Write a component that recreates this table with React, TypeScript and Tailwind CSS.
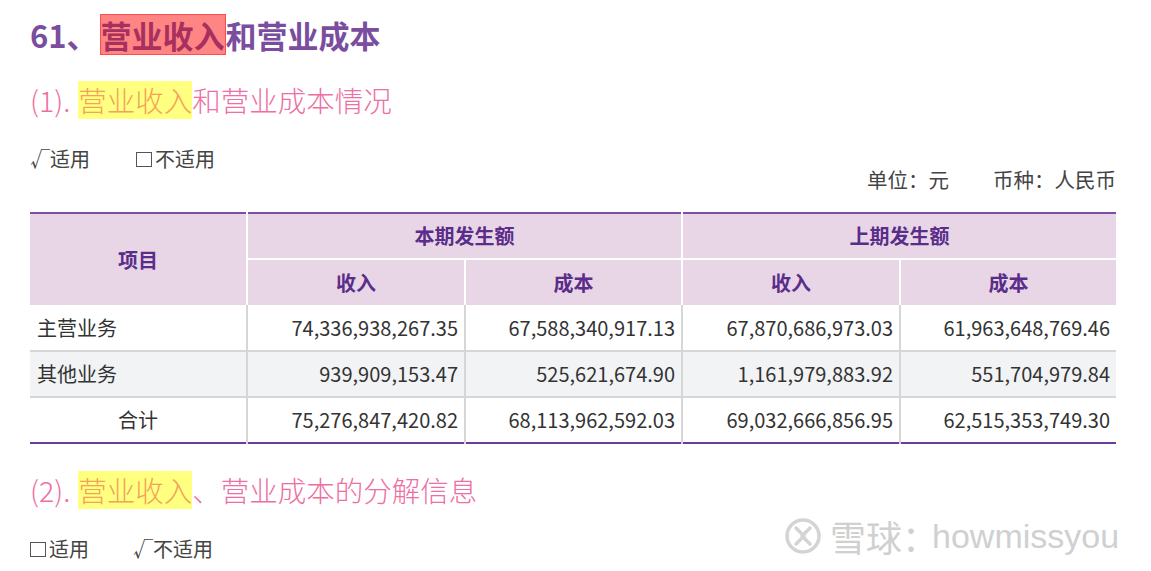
const ROWS = [
  { name: '主营业务', cells: ['74,336,938,267.35', '67,588,340,917.13', '67,870,686,973.03', '61,963,648,769.46'], bg: 'bg-white', center: false },
  { name: '其他业务', cells: ['939,909,153.47', '525,621,674.90', '1,161,979,883.92', '551,704,979.84'], bg: 'bg-[#f2f3f5]', center: false },
  { name: '合计', cells: ['75,276,847,420.82', '68,113,962,592.03', '69,032,666,856.95', '62,515,353,749.30'], bg: 'bg-white', center: true },
];

function XueqiuLogo() {
  return (
    <svg width="38" height="38" viewBox="0 0 38 38" fill="none">
      <circle cx="19" cy="19" r="16" stroke="#d4d4d4" strokeWidth="3.5" />
      <path d="M12 11l8 8-8 8" stroke="#d4d4d4" strokeWidth="3.5" strokeLinecap="round" strokeLinejoin="round" />
      <path d="M26 11l-8 8 8 8" stroke="#d4d4d4" strokeWidth="3.5" strokeLinecap="round" strokeLinejoin="round" />
    </svg>
  );
}

function Box() {
  return <span className="inline-block w-[16px] h-[15px] border border-[#555] mr-[3px]" />;
}

export default function App() {
  return (
    <div
      className="relative w-[1151px] h-[571px] overflow-hidden bg-white text-[#333]"
      style={{ fontFamily: '"Noto Sans CJK SC", "Noto Sans", sans-serif' }}
    >
      <div className="px-[30px]">
        {/* Title */}
        <h1 className="pt-[14px] h-[68px] flex items-start text-[31px] font-bold leading-[41px] text-[#7b4d9e]">
          <span className="mr-[2px]">61、</span>
          <span className="bg-[#ff8585] border border-[#ff4d4d] text-[#a8305f] leading-[39px]">营业收入</span>
          <span>和营业成本</span>
        </h1>

        {/* Subheading 1 */}
        <h2 className="h-[64px] flex items-center text-[28.5px] font-light text-[#ee6fa3] leading-[38px]">
          <span className="mr-[8px]">(1).</span>
          <span className="bg-[#ffff80] text-[#f3a25c]">营业收入</span>
          <span>和营业成本情况</span>
        </h2>

        <div className="mt-[14px] h-[26px] flex items-center text-[20px] text-[#444] leading-[26px]">
          <span>√适用</span>
          <span className="ml-[46px] flex items-center">
            <Box />
            不适用
          </span>
        </div>

        <div className="-mt-[5px] h-[45px] flex justify-end items-start text-[20.5px] text-[#444] leading-[24px] pr-[5px]">
          <span>单位：元</span>
          <span className="ml-[44px]">币种：人民币</span>
        </div>

        {/* Table */}
        <table className="w-[1086px] border-collapse table-fixed text-[20px]">
          <colgroup>
            <col className="w-[217px]" />
            <col className="w-[218px]" />
            <col className="w-[217px]" />
            <col className="w-[218px]" />
            <col className="w-[216px]" />
          </colgroup>
          <thead className="text-[#5b2d8a] font-bold text-[20px]">
            <tr className="h-[46px] border-t-2 border-[#7b4ea8]">
              <th rowSpan={2} className="bg-[#e8d6e6] border-r-2 border-white">项目</th>
              <th colSpan={2} className="bg-[#e8d6e6] border-r-2 border-b-2 border-white">本期发生额</th>
              <th colSpan={2} className="bg-[#e8d6e6] border-b-2 border-white">上期发生额</th>
            </tr>
            <tr className="h-[46px]">
              <th className="bg-[#e8d6e6] border-r-2 border-white">收入</th>
              <th className="bg-[#e8d6e6] border-r-2 border-white">成本</th>
              <th className="bg-[#e8d6e6] border-r-2 border-white">收入</th>
              <th className="bg-[#e8d6e6]">成本</th>
            </tr>
          </thead>
          <tbody>
            {ROWS.map((row, i) => (
              <tr
                key={row.name}
                className={`h-[46px] ${row.bg} ${i < ROWS.length - 1 ? 'border-b-2 border-[#d6d6d6]' : 'border-b-2 border-[#6a3d99]'}`}
              >
                <td className={`border-r-2 border-[#d6d6d6] px-[7px] ${row.center ? 'text-center' : 'text-left'}`}>
                  {row.name}
                </td>
                {row.cells.map((c, j) => (
                  <td
                    key={j}
                    className={`text-right pl-[6px] pr-[6px] ${j < row.cells.length - 1 ? 'border-r-2 border-[#d6d6d6]' : ''}`}
                  >
                    {c}
                  </td>
                ))}
              </tr>
            ))}
          </tbody>
        </table>

        {/* Subheading 2 */}
        <h2 className="mt-[26px] h-[40px] flex items-center text-[28.5px] font-light text-[#ee6fa3] leading-[38px]">
          <span className="mr-[8px]">(2).</span>
          <span className="bg-[#ffff80] text-[#f3a25c]">营业收入</span>
          <span>、营业成本的分解信息</span>
        </h2>

        <div className="mt-[26px] h-[26px] flex items-center text-[20px] text-[#444] leading-[26px]">
          <span className="flex items-center">
            <Box />
            适用
          </span>
          <span className="ml-[44px]">√不适用</span>
        </div>
      </div>

      {/* Watermark */}
      <div
        className="absolute left-[784px] top-[516px] flex items-center gap-[8px] text-[#d0d0d0] text-[34px] leading-[40px]"
        style={{ textShadow: '1px 1px 1px #ffffff, -1px -1px 1px #ffffff' }}
      >
        <XueqiuLogo />
        <span className="text-[36px]">雪球：</span>
        <span className="-ml-[14px]" style={{ fontFamily: '"Liberation Sans", Arial, sans-serif' }}>howmissyou</span>
      </div>
    </div>
  );
}
